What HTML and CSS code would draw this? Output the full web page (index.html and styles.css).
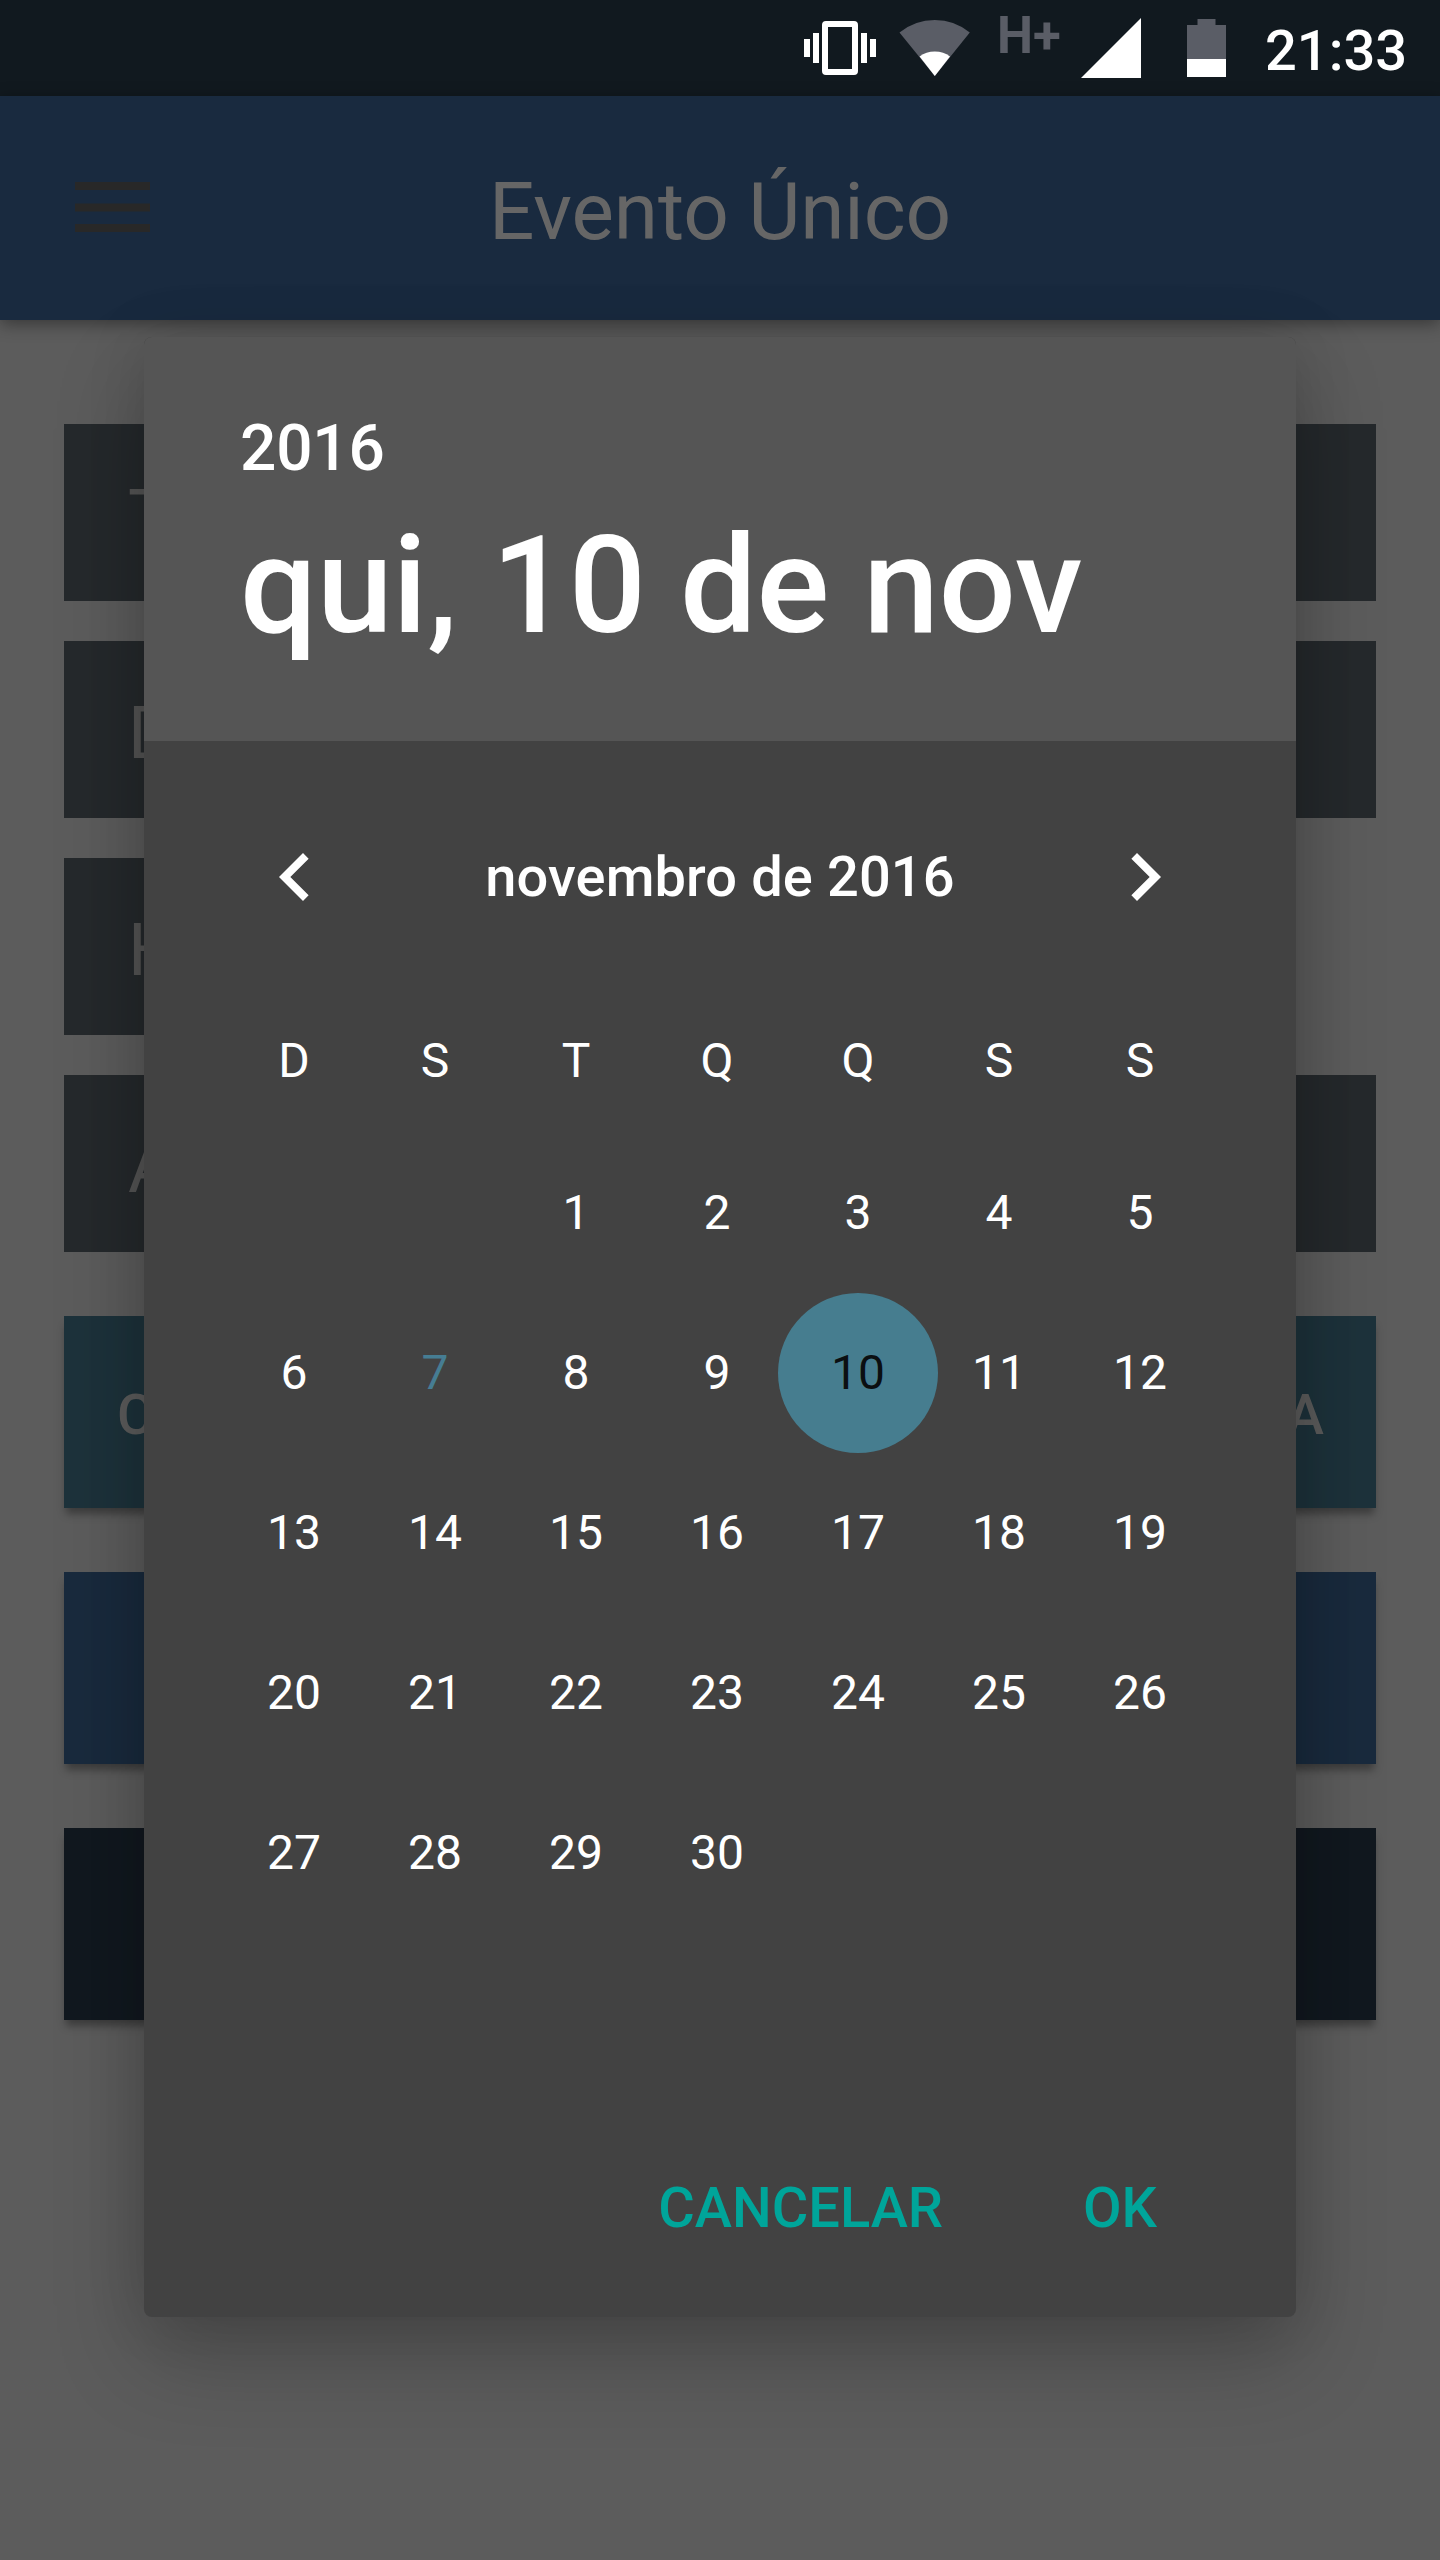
FILE: index.html
```html
<!DOCTYPE html>
<html lang="pt-BR">
<head>
<meta charset="utf-8">
<title>Evento Único</title>
<link rel="stylesheet" href="styles.css">
</head>
<body>
<div class="screen">
  <header class="status">
    <svg class="status-icons" width="440" height="96" viewBox="796 0 440 96">
      <g fill="#fff">
        <path fill-rule="evenodd" d="M826 21h28a4 4 0 0 1 4 4v46a4 4 0 0 1-4 4h-28a4 4 0 0 1-4-4V25a4 4 0 0 1 4-4zM828 27v42h24V27z"/>
        <path d="M804 39h6v18h-6zM813 33h6v30h-6zM861 33h6v30h-6zM870 39h6v18h-6z"/>
      </g>
      <path fill="#5a5d66" d="M934.8 76L899.5 32.5Q915 20 934.8 20T969.8 32.5z"/>
      <path fill="#fff" d="M934.8 76L919.6 56.5Q926 51.5 934.8 51.5T950 56.5z"/>
      <text class="network" x="997" y="52.500">H+</text>
      <path fill="#fff" d="M1081 78L1141 18V78z"/>
      <path fill="#5a5d66" d="M1187 25h10.500v-6h18v6H1226v34h-39z"/>
      <path fill="#fff" d="M1187 59h39v18h-39z"/>
    </svg>
    <span class="clock">21:33</span>
  </header>
  <div class="appbar">
    <svg class="menu" width="76" height="52" viewBox="0 0 76 52" fill="#282828"><path d="M0 0h75v8H0zM0 21.500h75v8H0zM0 42h75v8H0z"/></svg>
    <h1 class="title">Evento Único</h1>
  </div>
  <main class="form">
    <div class="field">T</div>
    <div class="field">D</div>
    <div class="field half">H</div>
    <div class="field">A</div>
    <div class="actions">
      <div class="btn teal"><span>C</span><span>A</span></div>
      <div class="btn blue"></div>
      <div class="btn navy"></div>
    </div>
  </main>
  <section class="dialog">
    <div class="head">
      <div class="year">2016</div>
      <div class="date">qui, 10 de nov</div>
    </div>
    <div class="month">
      <svg width="96" height="96" viewBox="0 0 24 24" fill="#fff"><path d="M15.410 7.410L14 6l-6 6 6 6 1.410-1.410L10.830 12z"/></svg>
      <span>novembro de 2016</span>
      <svg width="96" height="96" viewBox="0 0 24 24" fill="#fff"><path d="M10 6L8.590 7.410 13.170 12l-4.580 4.590L10 18l6-6z"/></svg>
    </div>
    <div class="grid week"><span>D</span><span>S</span><span>T</span><span>Q</span><span>Q</span><span>S</span><span>S</span></div>
    <div class="grid days">
      <span></span><span></span><span>1</span><span>2</span><span>3</span><span>4</span><span>5</span>
      <span>6</span><span class="today">7</span><span>8</span><span>9</span><span class="selected">10</span><span>11</span><span>12</span>
      <span>13</span><span>14</span><span>15</span><span>16</span><span>17</span><span>18</span><span>19</span>
      <span>20</span><span>21</span><span>22</span><span>23</span><span>24</span><span>25</span><span>26</span>
      <span>27</span><span>28</span><span>29</span><span>30</span>
    </div>
    <div class="buttons"><span>CANCELAR</span><span>OK</span></div>
  </section>
</div>
</body>
</html>
```
FILE: styles.css
```css
* { box-sizing: border-box; margin: 0; padding: 0; }
body { font-family: Roboto, sans-serif; background: #5c5c5c; }
.screen { position: relative; width: 1440px; height: 2560px; overflow: hidden; background: #5c5c5c; color: #fff; }
.status { display: flex; justify-content: flex-end; height: 96px; padding-right: 33px; background: #11191f; }
.status-icons { margin-right: 29px; }
.network { font-size: 51px; font-weight: 700; fill: #5a5d66; }
.clock { width: 142px; font-size: 56px; font-weight: 500; line-height: 102px; white-space: nowrap; }
.appbar { position: relative; display: grid; grid-template-columns: 240px 1fr 240px; align-items: center; height: 224px; background: #192a3f; box-shadow: 0 4px 16px rgba(0, 0, 0, .4); }
.menu { margin: 0 0 0 74.5px; }
.title { font-size: 80px; font-weight: 400; line-height: 94px; text-align: center; color: #666; padding-top: 8px; letter-spacing: -.1px; }
.form { display: flex; flex-direction: column; gap: 40px; padding: 104px 64px 0; }
.field { height: 177px; padding: 51px 64px 0; background: #25292c; color: #555; font-size: 72px; line-height: 84px; }
.half { width: 640px; }
.actions { display: flex; flex-direction: column; gap: 64px; padding-top: 24px; }
.btn { display: flex; justify-content: space-between; height: 192px; padding: 0 52px 0 53px; font-size: 56px; font-weight: 500; line-height: 198px; color: #5c5c5c; box-shadow: 0 8px 8px -2px rgba(0, 0, 0, .35); }
.teal { background: #1d323b; }
.blue { background: #192a3d; }
.navy { background: #11181f; }
.dialog { position: absolute; left: 144px; top: 337px; width: 1152px; height: 1980px; border-radius: 8px; background: #424242; box-shadow: 0 40px 90px rgba(0, 0, 0, .22), 0 0 60px rgba(0, 0, 0, .12); }
.head { height: 404px; padding: 72px 96px 0; border-radius: 8px 8px 0 0; background: #555; font-weight: 500; }
.year { font-size: 64px; line-height: 76px; padding-top: 2px; letter-spacing: -.2px; }
.date { font-size: 136px; line-height: 160px; padding-top: 19px; white-space: nowrap; }
.month { display: flex; align-items: center; justify-content: space-between; padding: 88px 103px 0; font-size: 56px; font-weight: 500; letter-spacing: .1px; }
.grid { display: grid; grid-template-columns: repeat(7, 141px); padding: 0 79.5px; font-size: 48px; text-align: center; }
.week { margin-top: 108px; line-height: 56px; }
.days { margin-top: 44px; grid-auto-rows: 160px; line-height: 160px; justify-items: center; }
.days span { width: 160px; }
.today { color: #467d93; }
.selected { border-radius: 50%; background: #467d8f; color: #0b0f11; }
.buttons { display: flex; justify-content: flex-end; gap: 140px; margin-top: 242px; padding-right: 139px; font-size: 56px; font-weight: 500; line-height: 66px; color: #00a59a; }
```
